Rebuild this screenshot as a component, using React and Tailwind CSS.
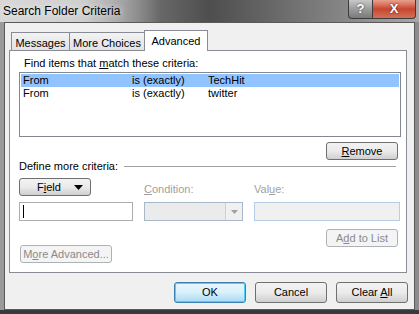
import React from 'react';

const font = { fontFamily: '"Liberation Sans", Arial, sans-serif' };

function Btn({ children, className = '', disabled, focus }) {
  const base = disabled
    ? 'border-[#adb2b5] bg-[#f4f4f4] text-[#8a8a8a]'
    : focus
    ? 'border-[#3c7fb1] bg-gradient-to-b from-[#eaf6fd] via-[#d9f0fc] to-[#a7d9f5] text-black shadow-[inset_0_0_0_1px_#48d2fd]'
    : 'border-[#707070] bg-gradient-to-b from-[#f2f2f2] via-[#ebebeb] to-[#cfcfcf] text-black';
  return (
    <div className={`flex items-center justify-center rounded-[3px] border text-[11px] leading-none ${base} ${className}`}>
      <span className="whitespace-pre">{children}</span>
    </div>
  );
}

function Tab({ label, active, className = '' }) {
  if (active) {
    return (
      <div className={`relative z-10 -mb-px flex h-[21px] items-start justify-center border border-b-0 border-[#898c95] bg-white pt-[4px] text-[11px] leading-[13px] ${className}`}>
        {label}
      </div>
    );
  }
  return (
    <div className={`-mr-px flex h-[18px] items-start justify-center border border-b-0 border-[#898c95] bg-gradient-to-b from-[#f3f3f3] to-[#e3e3e3] pt-[4px] text-[11px] leading-[13px] ${className}`}>
      {label}
    </div>
  );
}

export default function App() {
  const rows = [
    { field: 'From', cond: 'is (exactly)', value: 'TechHit', selected: true },
    { field: 'From', cond: 'is (exactly)', value: 'twitter' },
  ];

  return (
    <div
      style={font}
      className="flex h-[314px] w-[419px] flex-col bg-gradient-to-r from-[#9a9a9a] via-[#6a6a6a] to-[#8c8c8c] text-black"
    >
      {/* title bar */}
      <div className="relative h-[22px] bg-gradient-to-r from-[#c4c4c4] via-[#4e4e4e] to-[#a8a8a8]">
        <div className="absolute left-0 top-0 h-[22px] w-[160px] bg-gradient-to-r from-[#d8d8d8] via-[#cfcfcf] to-transparent" />
        <span className="absolute left-[3px] top-[4px] text-[12px] leading-[14px] text-black [text-shadow:0_0_6px_#ffffff]">
          Search Folder Criteria
        </span>
        <div className="absolute right-[3px] top-0 flex h-[19px]">
          <div className="flex w-[25px] items-center justify-center rounded-bl-[4px] border border-t-0 border-[#3c3c3c] bg-gradient-to-b from-[#c9c9c9] via-[#9c9c9c] to-[#7a7a7a] text-[13px] font-bold text-white [text-shadow:0_0_2px_#333]">
            ?
          </div>
          <div className="flex w-[43px] items-center justify-center rounded-br-[4px] border border-l-0 border-t-0 border-[#3c3c3c] bg-gradient-to-b from-[#e8a08c] via-[#c8452f] to-[#d2705a] text-[13px] font-bold text-white [text-shadow:0_0_2px_#400]">
            X
          </div>
        </div>
      </div>

      {/* client area */}
      <div className="mx-[4px] flex flex-1 flex-col border border-[#5a5a5a] bg-[#f0f0f0]">
        <div className="flex pl-[6px] pt-[7px]">
          <div className="flex items-end">
            <Tab label="Messages" className="w-[59px]" />
            <Tab label="More Choices" className="w-[76px]" />
            <Tab label="Advanced" active className="w-[64px]" />
          </div>
        </div>

        {/* tab panel */}
        <div className="ml-[4px] mr-[7px] h-[223px] border border-[#898c95] bg-white">
          <div className="ml-[14px] mt-[6px] text-[11px] leading-[13px]">
            Find items that <span className="underline">m</span>atch these criteria:
          </div>
          <div className="ml-[9px] mt-[2px] h-[65px] w-[382px] border border-[#828790] bg-white px-px pt-px">
            {rows.map((r, i) => (
              <div
                key={i}
                className={`flex h-[13px] items-center text-[11px] leading-none ${r.selected ? 'bg-[#91c3ff]' : ''}`}
              >
                <span className="w-[111px] pl-[2px]">{r.field}</span>
                <span className="w-[76px]">{r.cond}</span>
                <span>{r.value}</span>
              </div>
            ))}
          </div>
          <div className="mr-[8px] mt-[5px] flex justify-end">
            <Btn className="h-[18px] w-[72px]">
              <span className="underline">R</span>emove
            </Btn>
          </div>

          <div className="ml-[9px] mr-[10px] flex items-center gap-[6px] text-[11px] leading-[13px]">
            <span>Define more criteria:</span>
            <div className="h-px flex-1 bg-[#a0a0a0]" />
          </div>

          <div className="ml-[9px] mt-[5px] grid w-[383px] grid-cols-[114px_99px_146px] gap-x-[11px]">
            <div className="flex items-end">
              <div className="flex h-[18px] w-[72px] items-center rounded-[3px] border border-[#707070] bg-gradient-to-b from-[#f2f2f2] via-[#ebebeb] to-[#cfcfcf] pl-[17px] text-[11px] leading-none">
                <span>
                  F<span className="underline">i</span>eld
                </span>
                <svg className="ml-[13px]" width="9" height="5" viewBox="0 0 9 5">
                  <path d="M0 0h9L4.5 5z" fill="#000" />
                </svg>
              </div>
            </div>
            <div className="flex items-end text-[11px] leading-[13px] text-[#a0a0a0]">
              <span>
                <span className="underline">C</span>ondition:
              </span>
            </div>
            <div className="flex items-end text-[11px] leading-[13px] text-[#a0a0a0]">
              <span>
                Val<span className="underline">u</span>e:
              </span>
            </div>

            <div className="mt-[6px] flex h-[19px] items-center border border-[#abadb3] bg-white pl-[3px]">
              <div className="h-[13px] w-px bg-black" />
            </div>
            <div className="mt-[6px] flex h-[19px] border border-[#a7b8c8] bg-[#ebebeb]">
              <div className="flex-1" />
              <div className="flex w-[17px] items-center justify-center border-l border-[#c8d2da] bg-[#f0f0f0]">
                <svg width="7" height="4" viewBox="0 0 7 4">
                  <path d="M0 0h7L3.5 4z" fill="#a0a0a0" />
                </svg>
              </div>
            </div>
            <div className="mt-[6px] h-[19px] border border-[#b5cfe7] bg-[#f0f0f0]" />
          </div>

          <div className="ml-[10px] mr-[8px] mt-[8px] flex items-start justify-between">
            <Btn disabled className="mt-[16px] h-[18px] w-[92px]">
              M<span className="underline">o</span>re Advanced...
            </Btn>
            <Btn disabled className="h-[18px] w-[72px]">
              A<span className="underline">d</span>d to List
            </Btn>
          </div>
        </div>

        {/* bottom buttons */}
        <div className="mr-[6px] mt-[9px] flex justify-end gap-[9px]">
          <Btn focus className="h-[21px] w-[72px]">OK</Btn>
          <Btn className="h-[21px] w-[72px]">Cancel</Btn>
          <Btn className="h-[21px] w-[72px]">
            Clear <span className="underline">A</span>ll
          </Btn>
        </div>
      </div>
      <div className="h-[4px] bg-[#3a3a3a]" />
    </div>
  );
}
